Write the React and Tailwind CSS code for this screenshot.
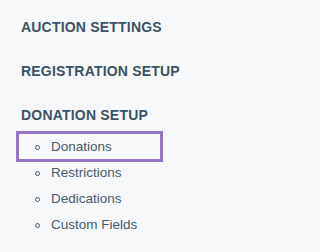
const sections = ['Auction Settings', 'Registration Setup', 'Donation Setup'];
const items = ['Donations', 'Restrictions', 'Dedications', 'Custom Fields'];

export default function App() {
  return (
    <div className="min-h-screen w-full bg-[#f7f8fa] pt-[17px] pl-[21px] font-['Liberation_Sans',Arial,sans-serif]">
      <div className="flex flex-col gap-6">
        {sections.map((s) => (
          <h2 key={s} className="text-[14px] leading-5 font-bold uppercase tracking-[0.2px] text-[#3b5366]">
            {s}
          </h2>
        ))}
      </div>
      <ul className="mt-[9px] flex w-[180px] flex-col">
        {items.map((item, i) => (
          <li key={item} className="relative flex h-[26px] items-center text-[13.5px] text-[#475b6c]">
            {i === 0 && (
              <span className="pointer-events-none absolute -top-[3px] -left-[5px] h-[31px] w-[147px] border-[3px] border-[#9672c8]" />
            )}
            <span className="ml-[14px] mr-[11px] h-[5px] w-[5px] rounded-full border-[1.5px] border-[#475b6c]" />
            <span>{item}</span>
          </li>
        ))}
      </ul>
    </div>
  );
}
